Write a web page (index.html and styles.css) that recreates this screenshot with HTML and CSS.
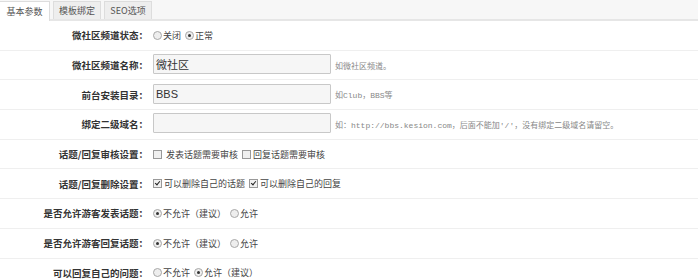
FILE: index.html
```html
<!DOCTYPE html>
<html lang="zh-CN">
<head>
    <meta charset="UTF-8">
    <meta name="viewport" content="width=device-width, initial-scale=1.0">
    <link rel="stylesheet" href="styles.css">
    <title>微社区设置</title>
</head>
<body>
    <div class="tabs">
        <span class="tab active">基本参数</span>
        <span class="tab">模板绑定</span>
        <span class="tab">SEO选项</span>
    </div>

    <div class="form">
        <div class="row">
            <div class="label">微社区频道状态：</div>
            <div class="value">
                <label class="opt"><span class="radio"></span>关闭</label>
                <label class="opt"><span class="radio on"></span>正常</label>
            </div>
        </div>
        <div class="row">
            <div class="label">微社区频道名称：</div>
            <div class="value">
                <input class="text" type="text" value="微社区">
                <span class="hint">如微社区频道。</span>
            </div>
        </div>
        <div class="row">
            <div class="label">前台安装目录：</div>
            <div class="value">
                <input class="text" type="text" value="BBS">
                <span class="hint">如Club，BBS等</span>
            </div>
        </div>
        <div class="row">
            <div class="label">绑定二级域名：</div>
            <div class="value">
                <input class="text" type="text" value="">
                <span class="hint">如：http://bbs.kesion.com，后面不能加'/'，没有绑定二级域名请留空。</span>
            </div>
        </div>
        <div class="row">
            <div class="label">话题/回复审核设置：</div>
            <div class="value">
                <label class="opt"><span class="check"></span>&nbsp;发表话题需要审核</label>
                <label class="opt"><span class="check"></span>回复话题需要审核</label>
            </div>
        </div>
        <div class="row">
            <div class="label">话题/回复删除设置：</div>
            <div class="value">
                <label class="opt"><span class="check on"></span>可以删除自己的话题</label>
                <label class="opt"><span class="check on"></span>可以删除自己的回复</label>
            </div>
        </div>
        <div class="row">
            <div class="label">是否允许游客发表话题：</div>
            <div class="value">
                <label class="opt"><span class="radio on"></span>不允许（建议）</label>
                <label class="opt"><span class="radio"></span>允许</label>
            </div>
        </div>
        <div class="row">
            <div class="label">是否允许游客回复话题：</div>
            <div class="value">
                <label class="opt"><span class="radio on"></span>不允许（建议）</label>
                <label class="opt"><span class="radio"></span>允许</label>
            </div>
        </div>
        <div class="row">
            <div class="label">可以回复自己的问题：</div>
            <div class="value">
                <label class="opt"><span class="radio"></span>不允许</label>
                <label class="opt"><span class="radio on"></span>允许（建议）</label>
            </div>
        </div>
    </div>
</body>
</html>
```

FILE: styles.css
```css
body {
    margin: 0;
    padding: 0;
    background-color: #fff;
    font-family: "Noto Sans CJK SC", "Liberation Sans", sans-serif;
    color: #333;
    overflow: hidden;
}

.tabs {
    display: flex;
    gap: 3px;
    height: 18px;
    padding-top: 1px;
    background-color: #f7f7f7;
    border-bottom: 2px solid #e6e6e6;
}

.tab {
    display: flex;
    align-items: center;
    justify-content: center;
    width: 48px;
    height: 18px;
    font-size: 9px;
    color: #555;
    background-color: #eee;
    border: 1px solid #ddd;
    border-bottom: none;
    box-sizing: border-box;
}

.tab.active {
    background-color: #fff;
    width: 50px;
    border-left: none;
    height: 20px;
    margin-bottom: -2px;
}

.form {
    border-bottom: 1px solid #d8dde6;
}

.row {
    display: flex;
    align-items: center;
    height: 28.7px;
    border-bottom: 1px solid #efefef;
}

.row:last-child {
    border-bottom: none;
}

.label {
    width: 148px;
    flex-shrink: 0;
    text-align: right;
    font-size: 9.5px;
    font-weight: bold;
    color: #333;
}

.value {
    display: flex;
    align-items: center;
    padding-left: 5px;
    font-size: 9px;
    color: #444;
}

.opt {
    display: flex;
    align-items: center;
    margin-right: 4px;
}

.text {
    width: 178px;
    height: 20px;
    box-sizing: border-box;
    padding: 0 2px;
    border: 1px solid #c8c8c8;
    border-radius: 1px;
    background-color: #f6f6f6;
    font-family: "Liberation Sans", "Noto Sans CJK SC", sans-serif;
    font-size: 11px;
    color: #333;
    margin-top: -2px;
}

.hint {
    margin-left: 4px;
    font-size: 8px;
    color: #888;
    font-family: "Liberation Mono", "Noto Sans CJK SC", monospace;
}

.radio {
    display: inline-block;
    position: relative;
    width: 7px;
    height: 7px;
    margin-right: 1px;
    border: 1px solid #a8a8a8;
    border-radius: 50%;
    background-color: #eee;
}

.radio.on::after {
    content: "";
    position: absolute;
    left: 2px;
    top: 2px;
    width: 3px;
    height: 3px;
    border-radius: 50%;
    background-color: #333;
}

.check {
    display: inline-block;
    position: relative;
    width: 7px;
    height: 7px;
    margin-right: 2px;
    border: 1px solid #999;
    background-color: #f0f0f0;
}

.check.on::after {
    content: "";
    position: absolute;
    left: 2px;
    top: 0;
    width: 2px;
    height: 4px;
    border: solid #222;
    border-width: 0 1.5px 1.5px 0;
    transform: rotate(40deg);
}
```
